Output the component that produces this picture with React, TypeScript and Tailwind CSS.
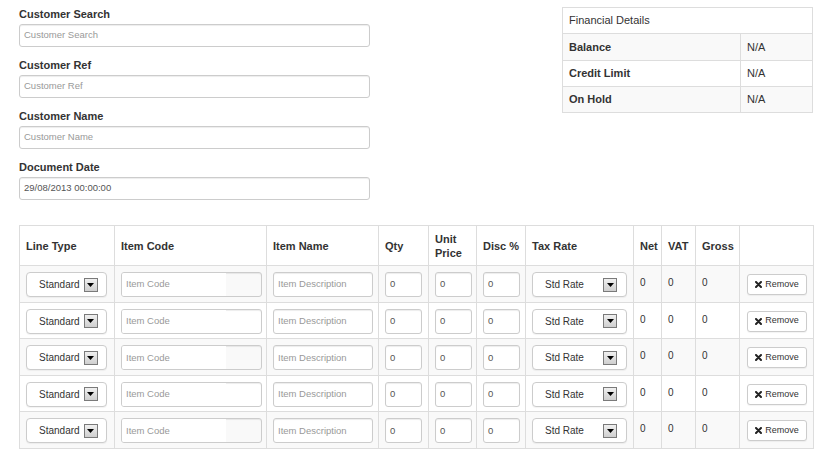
import React from 'react';

const font = { fontFamily: '"Liberation Sans", Arial, sans-serif' };

const Arrow: React.FC = () => (
  <span className="flex h-[14px] w-[14px] items-center justify-center border border-[#7a7a7a] bg-gradient-to-b from-[#f0f0f0] to-[#cfcfcf]">
    <svg width="7" height="4" viewBox="0 0 7 4">
      <path d="M0 0 L7 0 L3.5 4 Z" fill="#000" />
    </svg>
  </span>
);

const Field: React.FC<{ label: string; placeholder?: string; value?: string }> = ({ label, placeholder, value }) => (
  <div className="mb-[10px]">
    <label className="block h-[16px] text-[11px] font-bold leading-[16px] text-[#333]">{label}</label>
    <div className="mt-[2px] flex h-[23px] w-[351px] items-center rounded-[3px] border border-[#ccc] bg-white px-[4px] shadow-[inset_0_1px_1px_rgba(0,0,0,0.075)]">
      {value ? (
        <span className="text-[9.5px] text-[#555]">{value}</span>
      ) : (
        <span className="text-[9.5px] text-[#999]">{placeholder}</span>
      )}
    </div>
  </div>
);

const TextBox: React.FC<{ w: string; text: string; muted?: boolean }> = ({ w, text, muted }) => (
  <div
    className={`flex h-[25px] items-center rounded-[3px] border border-[#ccc] bg-white px-[4px] shadow-[inset_0_1px_1px_rgba(0,0,0,0.075)] ${w}`}
  >
    <span className={`text-[9.5px] ${muted ? 'text-[#999]' : 'text-[#555]'}`}>{text}</span>
  </div>
);

const headers = ['Line Type', 'Item Code', 'Item Name', 'Qty', 'Unit Price', 'Disc %', 'Tax Rate', 'Net', 'VAT', 'Gross', ''];
const widths = [95, 152, 112, 50, 48, 49, 108, 28, 34, 44, 74];

const LineRow: React.FC<{ striped: boolean }> = ({ striped }) => {
  const td = 'border border-[#ddd] px-[6px] align-top pt-[6px]';
  const num = 'border border-[#ddd] px-[6px] pt-[9px] align-top text-[10px] text-[#333]';
  return (
    <tr className={`h-[36.6px] ${striped ? 'bg-[#f9f9f9]' : 'bg-white'}`}>
      <td className={td}>
        <div className="flex h-[25px] w-[81px] items-center rounded-[4px] border border-[#ccc] bg-white pl-[12px] shadow-[0_1px_1px_rgba(0,0,0,0.05)]">
          <span className="mr-[4px] text-[10px] text-[#333]">Standard</span>
          <Arrow />
        </div>
      </td>
      <td className={td}>
        <div className="flex h-[25px] w-[141px] overflow-hidden rounded-[3px] border border-[#ccc] shadow-[inset_0_1px_1px_rgba(0,0,0,0.075)]">
          <div className="flex w-[104px] items-center bg-white px-[4px]">
            <span className="text-[9.5px] text-[#999]">Item Code</span>
          </div>
        </div>
      </td>
      <td className={td}>
        <TextBox w="w-[100px]" text="Item Description" muted />
      </td>
      <td className={td}>
        <TextBox w="w-[37px]" text="0" />
      </td>
      <td className={td}>
        <TextBox w="w-[37px]" text="0" />
      </td>
      <td className={td}>
        <TextBox w="w-[37px]" text="0" />
      </td>
      <td className={td}>
        <div className="flex h-[25px] w-[95px] items-center rounded-[4px] border border-[#ccc] bg-white pl-[12px] pr-[9px] shadow-[0_1px_1px_rgba(0,0,0,0.05)]">
          <span className="flex-1 text-[10px] text-[#333]">Std Rate</span>
          <Arrow />
        </div>
      </td>
      <td className={num}>0</td>
      <td className={num}>0</td>
      <td className={num}>0</td>
      <td className="border border-[#ddd] px-[6px] pt-[8px] align-top">
        <div className="ml-[1px] flex h-[21px] w-[60px] items-center justify-center gap-[3px] rounded-[3px] border border-[#ccc] bg-white shadow-[0_1px_1px_rgba(0,0,0,0.05)]">
          <svg width="7" height="7" viewBox="0 0 7 7">
            <path d="M1 1 L6 6 M6 1 L1 6" stroke="#222" strokeWidth="2" strokeLinecap="round" />
          </svg>
          <span className="text-[9px] text-[#333]">Remove</span>
        </div>
      </td>
    </tr>
  );
};

const App: React.FC = () => {
  return (
    <div className="min-h-[450px] w-[830px] bg-white pl-[19px] pr-[17px] pt-[6px]" style={font}>
      <div className="flex justify-between">
        <div>
          <Field label="Customer Search" placeholder="Customer Search" />
          <Field label="Customer Ref" placeholder="Customer Ref" />
          <Field label="Customer Name" placeholder="Customer Name" />
          <Field label="Document Date" value="29/08/2013 00:00:00" />
        </div>
        <table className="mt-[1px] h-[106px] w-[250px] table-fixed border-collapse self-start text-[11px] text-[#333]">
          <colgroup>
            <col className="w-[178px]" />
            <col className="w-[72px]" />
          </colgroup>
          <tbody>
            <tr className="h-[26px] bg-white">
              <td colSpan={2} className="border border-[#ddd] px-[6px]">Financial Details</td>
            </tr>
            <tr className="h-[27px] bg-[#f9f9f9]">
              <td className="border border-[#ddd] px-[6px] font-bold">Balance</td>
              <td className="border border-[#ddd] px-[6px]">N/A</td>
            </tr>
            <tr className="h-[26px] bg-white">
              <td className="border border-[#ddd] px-[6px] font-bold">Credit Limit</td>
              <td className="border border-[#ddd] px-[6px]">N/A</td>
            </tr>
            <tr className="h-[26px] bg-[#f9f9f9]">
              <td className="border border-[#ddd] px-[6px] font-bold">On Hold</td>
              <td className="border border-[#ddd] px-[6px]">N/A</td>
            </tr>
          </tbody>
        </table>
      </div>

      <table className="mt-[15px] w-[794px] table-fixed border-collapse">
        <colgroup>
          {widths.map((w, i) => (
            <col key={i} style={{ width: w }} />
          ))}
        </colgroup>
        <thead>
          <tr className="h-[40px] bg-white">
            {headers.map((h, i) => (
              <th
                key={i}
                className="whitespace-nowrap border border-[#ddd] px-[6px] text-left align-middle text-[11px] font-bold leading-[14px] text-[#333]"
              >
                {h === 'Unit Price' ? (
                  <>
                    Unit
                    <br />
                    Price
                  </>
                ) : (
                  h
                )}
              </th>
            ))}
          </tr>
        </thead>
        <tbody>
          {[0, 1, 2, 3, 4].map((i) => (
            <LineRow key={i} striped={i % 2 === 0} />
          ))}
        </tbody>
      </table>
    </div>
  );
};

export default App;
